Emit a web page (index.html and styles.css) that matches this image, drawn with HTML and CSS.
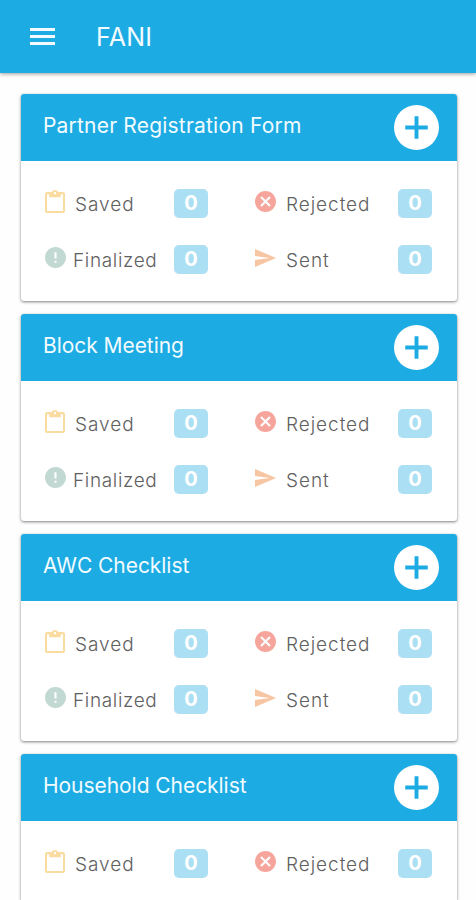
FILE: index.html
```html
<!DOCTYPE html>
<html lang="en">
<head>
<meta charset="utf-8">
<title>FANI</title>
<link rel="stylesheet" href="styles.css">
</head>
<body>
<svg width="0" height="0" class="defs" aria-hidden="true">
  <symbol id="saved" viewBox="3 0 18 22" preserveAspectRatio="none"><path d="M19 2h-4.180C14.400.840 13.300 0 12 0c-1.300 0-2.400.840-2.820 2H5c-1.100 0-2 .900-2 2v16c0 1.100.900 2 2 2h14c1.100 0 2-.900 2-2V4c0-1.100-.900-2-2-2zm-7 0c.550 0 1 .450 1 1s-.450 1-1 1-1-.450-1-1 .450-1 1-1zm7.200 18.200H4.800V4h2v3h10.400V4h2z"/></symbol>
  <symbol id="rejected" viewBox="2 2 20 20"><path d="M12 2C6.470 2 2 6.470 2 12s4.470 10 10 10 10-4.470 10-10S17.530 2 12 2zm5 13.590L15.590 17 12 13.410 8.410 17 7 15.590 10.590 12 7 8.410 8.410 7 12 10.590 15.590 7 17 8.410 13.410 12 17 15.590z"/></symbol>
  <symbol id="finalized" viewBox="2 2 20 20"><path d="M12 2C6.480 2 2 6.480 2 12s4.480 10 10 10 10-4.480 10-10S17.520 2 12 2zm1 15h-2v-2h2v2zm0-4h-2V7h2v6z"/></symbol>
  <symbol id="sent" viewBox="2 3 21 18"><path d="M2.010 21L23 12 2.010 3 2 10l15 2-15 2z"/></symbol>
  <symbol id="plus" viewBox="0 0 46 46"><path d="M21 11.500h4v9.500h9.500v4H25v9.500h-4V25h-9.500v-4H21z"/></symbol>
</svg>
<header class="appbar">
  <svg class="menu" viewBox="0 0 25 17"><path d="M0 0h25v3H0zM0 7h25v3H0zM0 14h25v3H0z"/></svg>
  <h1 class="brand">FANI</h1>
</header>
<main class="list">
  <section class="card">
    <div class="card-head"><h2 class="title wide">Partner Registration Form</h2><button class="add" aria-label="Add"><svg><use href="#plus"/></svg></button></div>
    <div class="stats">
      <div class="stat"><svg class="icon saved"><use href="#saved"/></svg><span class="label">Saved</span><b class="badge">0</b></div>
      <div class="stat"><svg class="icon rejected"><use href="#rejected"/></svg><span class="label">Rejected</span><b class="badge">0</b></div>
      <div class="stat"><svg class="icon finalized"><use href="#finalized"/></svg><span class="label">Finalized</span><b class="badge">0</b></div>
      <div class="stat"><svg class="icon sent"><use href="#sent"/></svg><span class="label">Sent</span><b class="badge">0</b></div>
    </div>
  </section>
  <section class="card">
    <div class="card-head"><h2 class="title">Block Meeting</h2><button class="add" aria-label="Add"><svg><use href="#plus"/></svg></button></div>
    <div class="stats">
      <div class="stat"><svg class="icon saved"><use href="#saved"/></svg><span class="label">Saved</span><b class="badge">0</b></div>
      <div class="stat"><svg class="icon rejected"><use href="#rejected"/></svg><span class="label">Rejected</span><b class="badge">0</b></div>
      <div class="stat"><svg class="icon finalized"><use href="#finalized"/></svg><span class="label">Finalized</span><b class="badge">0</b></div>
      <div class="stat"><svg class="icon sent"><use href="#sent"/></svg><span class="label">Sent</span><b class="badge">0</b></div>
    </div>
  </section>
  <section class="card">
    <div class="card-head"><h2 class="title">AWC Checklist</h2><button class="add" aria-label="Add"><svg><use href="#plus"/></svg></button></div>
    <div class="stats">
      <div class="stat"><svg class="icon saved"><use href="#saved"/></svg><span class="label">Saved</span><b class="badge">0</b></div>
      <div class="stat"><svg class="icon rejected"><use href="#rejected"/></svg><span class="label">Rejected</span><b class="badge">0</b></div>
      <div class="stat"><svg class="icon finalized"><use href="#finalized"/></svg><span class="label">Finalized</span><b class="badge">0</b></div>
      <div class="stat"><svg class="icon sent"><use href="#sent"/></svg><span class="label">Sent</span><b class="badge">0</b></div>
    </div>
  </section>
  <section class="card last">
    <div class="card-head"><h2 class="title">Household Checklist</h2><button class="add" aria-label="Add"><svg><use href="#plus"/></svg></button></div>
    <div class="stats">
      <div class="stat"><svg class="icon saved"><use href="#saved"/></svg><span class="label">Saved</span><b class="badge">0</b></div>
      <div class="stat"><svg class="icon rejected"><use href="#rejected"/></svg><span class="label">Rejected</span><b class="badge">0</b></div>
    </div>
  </section>
</main>
</body>
</html>
```
FILE: styles.css
```css
* { box-sizing: border-box; }
body {
  margin: 0;
  height: 900px;
  overflow: hidden;
  background: #fefefe;
  font-family: Inter, "Liberation Sans", sans-serif;
}
.defs { display: none; }
.appbar {
  height: 73px;
  padding-left: 30px;
  display: flex;
  align-items: center;
  background: #1dabe3;
  box-shadow: 0 1px 4px rgba(0, 0, 0, .4);
}
.menu { width: 25px; height: 17px; fill: #f2fbff; }
.brand {
  margin: 0 0 0 41px;
  font-size: 25px;
  font-weight: 400;
  line-height: 30px;
  letter-spacing: .2px;
  color: #f2fbff;
}
.list {
  padding: 21px 19px 0 21px;
  display: flex;
  flex-direction: column;
  gap: 13px;
}
.card {
  height: 207px;
  flex: none;
  border-radius: 3px;
  background: #fff;
  box-shadow: 0 1px 3px rgba(0, 0, 0, .5);
}
.last { height: 146px; border-radius: 3px 3px 0 0; }
.card-head {
  height: 67px;
  padding: 0 18px 1px 22px;
  display: flex;
  align-items: center;
  justify-content: space-between;
  background: #1dabe3;
  border-radius: 3px 3px 0 0;
}
.title {
  margin: 0 0 3px;
  font-size: 21px;
  font-weight: 400;
  line-height: 28px;
  letter-spacing: -.05px;
  white-space: nowrap;
  color: #f2fbff;
}
.wide { letter-spacing: .2px; }
.add {
  width: 45px;
  height: 45px;
  padding: 0;
  border: 0;
  border-radius: 50%;
  background: #fff;
}
.add svg { display: block; width: 45px; height: 45px; fill: #1dabe3; }
.stats {
  padding: 27px 25px 0 24px;
  display: grid;
  grid-template-columns: 163px 177px;
  justify-content: space-between;
  row-gap: 26px;
}
.stat { height: 30px; display: flex; align-items: center; }
.icon { flex: none; width: 21px; height: 21px; margin-bottom: 3px; }
.saved { width: 20px; height: 23px; fill: #fbdca0; }
.rejected { fill: #f6a59c; }
.finalized { fill: #c2d8d2; }
.sent { height: 18px; fill: #f8c5a3; }
.label {
  margin: 3px 0 0 10px;
  font-size: 19px;
  font-weight: 300;
  line-height: 26px;
  letter-spacing: .95px;
  color: #606060;
}
.finalized + .label { margin-left: 7px; letter-spacing: .65px; }
.badge {
  width: 34px;
  height: 29px;
  margin-left: auto;
  border-radius: 5px;
  background: #abdff3;
  color: #fff;
  font-size: 20px;
  font-weight: 700;
  line-height: 28px;
  text-align: center;
}
```
